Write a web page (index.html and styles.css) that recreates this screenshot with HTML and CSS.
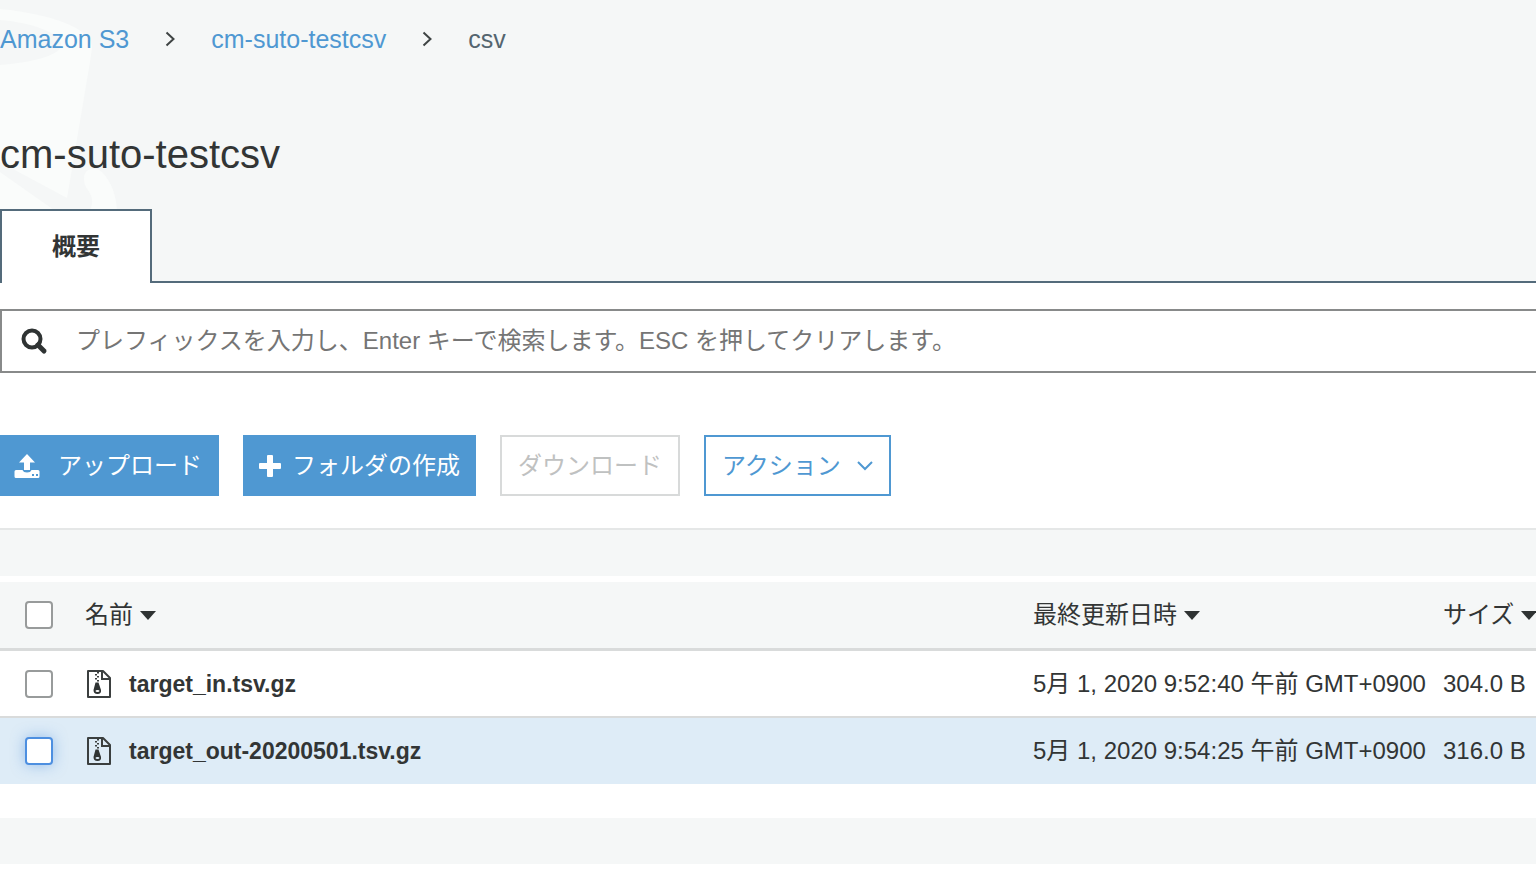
FILE: index.html
```html
<!DOCTYPE html>
<html lang="ja">
<head>
    <meta charset="UTF-8">
    <meta name="viewport" content="width=device-width, initial-scale=1.0">
    <title>cm-suto-testcsv</title>
    <link rel="stylesheet" href="styles.css">
</head>
<body>
    <header class="header">
        <svg class="bucket" width="130" height="210" viewBox="0 0 130 210" aria-hidden="true">
            <path fill="#fafcfb" d="M0 9C42 13 92 26 92 48L90 62L67 198L0 162Z"/>
            <path fill="#f5f7f7" d="M0 20C28 22 61 32 61 45C61 56 28 63 0 65Z"/>
            <path fill="#fafcfb" d="M0 172L54 210H0Z"/>
            <path fill="#fafcfb" d="M84 178C84 168 96 166 102 172C112 182 116 196 117 210H90C94 202 92 196 88 190Q84 186 84 178Z"/>
        </svg>
        <nav class="breadcrumb">
            <a href="#">Amazon S3</a>
            <svg class="chevron" width="10" height="16" viewBox="0 0 10 16" aria-hidden="true"><path d="M1.500 1.500L8.500 8L1.500 14.500"/></svg>
            <a href="#">cm-suto-testcsv</a>
            <svg class="chevron" width="10" height="16" viewBox="0 0 10 16" aria-hidden="true"><path d="M1.500 1.500L8.500 8L1.500 14.500"/></svg>
            <span class="current">csv</span>
        </nav>
        <h1 class="title">cm-suto-testcsv</h1>
        <div class="tabs">
            <button type="button" class="tab">概要</button>
        </div>
    </header>

    <main>
        <div class="search">
            <label for="prefix" aria-label="検索">
                <svg width="28" height="28" viewBox="0 0 28 28" aria-hidden="true">
                    <circle cx="12" cy="12" r="8.500" fill="none" stroke="#2f3333" stroke-width="4"/>
                    <path d="M18 18L24 24" stroke="#2f3333" stroke-width="5" stroke-linecap="round"/>
                </svg>
            </label>
            <input type="text" id="prefix" name="prefix" placeholder="プレフィックスを入力し、Enter キーで検索します。ESC を押してクリアします。">
        </div>

        <div class="toolbar">
            <button type="button" class="btn btn-primary btn-upload">
                <svg width="26" height="26" viewBox="0 0 26 26" aria-hidden="true">
                    <path fill="#fff" fill-rule="evenodd" d="M13 1L21 9.500H16V17H10V9.500H5ZM2 17H8.500Q9.500 19.500 13 19.500T17.500 17H24Q25.500 17 25.500 18.500V23.500Q25.500 25 24 25H2Q0.500 25 0.500 23.500V18.500Q0.500 17 2 17ZM18 21V23H20V21ZM22 21V23H24V21Z"/>
                </svg>
                アップロード
            </button>
            <button type="button" class="btn btn-primary btn-create">
                <svg width="22" height="22" viewBox="0 0 22 22" aria-hidden="true">
                    <path fill="#fff" d="M9 0H13Q14 0 14 1V8H21Q22 8 22 9V13Q22 14 21 14H14V21Q14 22 13 22H9Q8 22 8 21V14H1Q0 14 0 13V9Q0 8 1 8H8V1Q8 0 9 0Z"/>
                </svg>
                フォルダの作成
            </button>
            <button type="button" class="btn btn-disabled" disabled>ダウンロード</button>
            <button type="button" class="btn btn-outline">
                アクション
                <svg width="16" height="10" viewBox="0 0 16 10" aria-hidden="true"><path d="M1 1L8 8L15 1" fill="none" stroke="#4f98d2" stroke-width="2"/></svg>
            </button>
        </div>

        <div class="band band-top"></div>

        <table class="objects">
            <thead>
                <tr>
                    <th class="col-check"><input type="checkbox" class="check" aria-label="すべて選択"></th>
                    <th class="col-name"><button type="button" class="sort">名前<span class="caret"></span></button></th>
                    <th class="col-date"><button type="button" class="sort">最終更新日時<span class="caret"></span></button></th>
                    <th class="col-size"><button type="button" class="sort">サイズ<span class="caret"></span></button></th>
                </tr>
            </thead>
            <tbody>
                <tr>
                    <td class="col-check"><input type="checkbox" class="check" aria-label="target_in.tsv.gz"></td>
                    <td>
                        <a href="#" class="file">
                            <svg width="24" height="28" viewBox="0 0 24 28" aria-hidden="true"><use href="#zip"/></svg>
                            target_in.tsv.gz
                        </a>
                    </td>
                    <td>5月 1, 2020 9:52:40 午前 GMT+0900</td>
                    <td>304.0 B</td>
                </tr>
                <tr class="active">
                    <td class="col-check"><input type="checkbox" class="check check-focus" aria-label="target_out-20200501.tsv.gz"></td>
                    <td>
                        <a href="#" class="file">
                            <svg width="24" height="28" viewBox="0 0 24 28" aria-hidden="true"><use href="#zip"/></svg>
                            target_out-20200501.tsv.gz
                        </a>
                    </td>
                    <td>5月 1, 2020 9:54:25 午前 GMT+0900</td>
                    <td>316.0 B</td>
                </tr>
            </tbody>
        </table>

        <div class="band band-bottom"></div>
    </main>

    <svg class="sprite" width="0" height="0" aria-hidden="true">
        <symbol id="zip" viewBox="0 0 24 28">
            <path d="M1 1H16L23 8V27H1Z" fill="none" stroke="#3b3f3f" stroke-width="2" stroke-linejoin="round"/>
            <path d="M15 1V9H23" fill="none" stroke="#3b3f3f" stroke-width="2"/>
            <path d="M10 2h2v1.500h-2zM8 4h2v1.500H8zM10 6h2v1.500h-2zM8 8h2v1.500H8zM10 10h2v1.500h-2z" fill="#3b3f3f"/>
            <path fill="#2f3333" fill-rule="evenodd" d="M8.500 12.500H11.500L14 20Q14.500 24 10.500 24T6.500 20ZM10.500 20Q8.500 20 8.500 21T10.500 22T12.500 21T10.500 20Z"/>
        </symbol>
    </svg>
</body>
</html>
```

FILE: styles.css
```css
* {
    box-sizing: border-box;
}

body {
    margin: 0;
    background-color: #ffffff;
    color: #323535;
    font-family: "Liberation Sans", "Noto Sans CJK JP", sans-serif;
    font-size: 24px;
    line-height: 32px;
    overflow-x: hidden;
}

button, input {
    font: inherit;
    color: inherit;
}

button {
    cursor: pointer;
}

a {
    text-decoration: none;
}

/* Header */
.header {
    position: relative;
    background-color: #f5f7f7;
    padding-top: 23px;
}

.bucket {
    position: absolute;
    left: 0;
    top: 0;
}

.breadcrumb {
    position: relative;
    display: flex;
    align-items: center;
    font-size: 25px;
}

.breadcrumb a {
    color: #4f98d2;
}

.breadcrumb .current {
    color: #54656f;
}

.chevron {
    margin: 0 36px;
    fill: none;
    stroke: #3f4444;
    stroke-width: 2;
}

.title {
    position: relative;
    margin: 75px 0 31px;
    font-size: 40px;
    line-height: 48px;
    font-weight: normal;
}

.tabs {
    position: relative;
    display: flex;
    border-bottom: 2px solid #546b7b;
}

.tab {
    height: 74px;
    margin-bottom: -2px;
    padding: 0 50px;
    background-color: #ffffff;
    border: 2px solid #546b7b;
    border-bottom: none;
    font-weight: bold;
}

/* Search */
.search {
    display: flex;
    align-items: center;
    height: 64px;
    margin-top: 26px;
    border: 2px solid #888a8a;
    border-right: none;
}

.search label {
    display: flex;
    padding: 0 28px 0 18px;
}

.search input {
    flex: 1;
    padding: 0;
    border: none;
    outline: none;
    background: none;
}

.search input::placeholder {
    color: #757575;
    opacity: 1;
}

/* Buttons */
.toolbar {
    display: flex;
    gap: 24px;
    padding: 62px 0 32px;
}

.btn {
    display: flex;
    align-items: center;
    height: 61px;
    padding: 0 16px;
    border: 2px solid #4f98d2;
    background-color: #ffffff;
}

.btn-primary {
    background-color: #4f98d2;
    color: #ffffff;
}

.btn-upload {
    gap: 18px;
    padding: 0 15px 0 12px;
}

.btn-create {
    gap: 11px;
    padding: 0 14px;
}

.btn-disabled {
    border-color: #d8dada;
    color: #bfc1c1;
    cursor: default;
}

.btn-outline {
    gap: 16px;
    color: #4f98d2;
}

/* Bands above and below the table */
.band {
    height: 46px;
    background-color: #f5f7f7;
}

.band-top {
    height: 48px;
    border-top: 2px solid #e5e7e7;
    margin-bottom: 6px;
}

.band-bottom {
    margin: 34px 0 26px;
}

/* Table */
.objects {
    width: 100%;
    table-layout: fixed;
    border-collapse: separate;
    border-spacing: 0;
}

.objects th, .objects td {
    height: 67px;
    padding: 0;
    text-align: left;
    white-space: nowrap;
    font-weight: normal;
}

.objects th {
    height: 69px;
    background-color: #f5f7f7;
    border-bottom: 3px solid #d9dbdb;
}

.objects td {
    border-bottom: 2px solid #d9dbdb;
}

.objects .active td {
    height: 66px;
    background-color: #deecf7;
    border-bottom: none;
}

.objects .col-check {
    width: 85px;
    padding-left: 25px;
}

.col-date {
    width: 410px;
}

.col-size {
    width: 93px;
}

.check {
    appearance: none;
    display: block;
    width: 28px;
    height: 28px;
    margin: 0;
    background-color: #ffffff;
    border: 2px solid #989b9b;
    border-radius: 4px;
}

.check-focus {
    border-color: #4d8fe0;
    box-shadow: 0 0 14px rgba(77, 143, 224, 0.5);
}

.sort {
    display: flex;
    align-items: center;
    gap: 7px;
    padding: 0;
    border: none;
    background: none;
}

.caret {
    border-left: 8px solid transparent;
    border-right: 8px solid transparent;
    border-top: 9px solid #2f3333;
}

.file {
    display: flex;
    align-items: center;
    gap: 18px;
    padding-left: 2px;
    color: #323535;
    font-size: 23px;
    font-weight: bold;
}

.sprite {
    display: block;
}
```
